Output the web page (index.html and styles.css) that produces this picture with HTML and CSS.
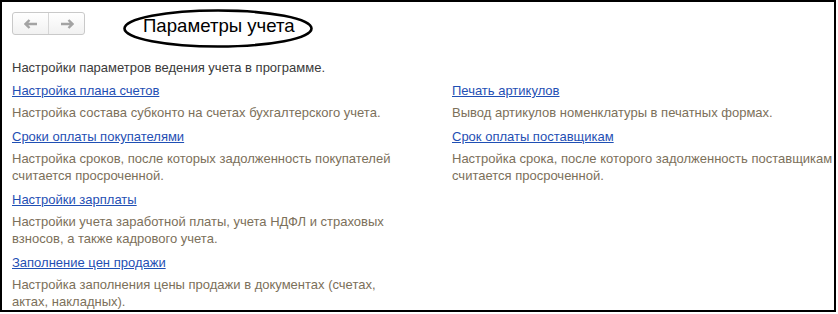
FILE: index.html
```html
<!DOCTYPE html>
<html lang="ru">
<head>
<meta charset="utf-8">
<link rel="stylesheet" href="styles.css">
</head>
<body>
<div class="frame">
  <div class="header">
    <div class="nav">
      <span class="nav-btn">
        <svg width="14" height="10" viewBox="0 0 14 10"><path d="M1 5H13M5.5 1L1.5 5L5.5 9" fill="none" stroke="#a3a3a3" stroke-width="2.4"/></svg>
      </span>
      <span class="nav-btn">
        <svg width="14" height="10" viewBox="0 0 14 10"><path d="M1 5H13M8.5 1L12.5 5L8.5 9" fill="none" stroke="#a3a3a3" stroke-width="2.4"/></svg>
      </span>
    </div>
    <div class="title-wrap">
      <h1 class="title">Параметры учета</h1>
      <svg class="ellipse" width="192" height="41" viewBox="0 0 192 41"><ellipse cx="96" cy="20.5" rx="93.5" ry="18" fill="none" stroke="#000" stroke-width="2.6"/></svg>
    </div>
  </div>
  <p class="intro">Настройки параметров ведения учета в программе.</p>
  <div class="columns">
    <div class="col col-left">
      <div class="item">
        <a class="link" href="#">Настройка плана счетов</a>
        <p class="desc">Настройка состава субконто на счетах бухгалтерского учета.</p>
      </div>
      <div class="item">
        <a class="link" href="#">Сроки оплаты покупателями</a>
        <p class="desc">Настройка сроков, после которых задолженность покупателей считается просроченной.</p>
      </div>
      <div class="item">
        <a class="link" href="#">Настройки зарплаты</a>
        <p class="desc">Настройки учета заработной платы, учета НДФЛ и страховых взносов, а также кадрового учета.</p>
      </div>
      <div class="item">
        <a class="link" href="#">Заполнение цен продажи</a>
        <p class="desc">Настройка заполнения цены продажи в документах (счетах, актах, накладных).</p>
      </div>
    </div>
    <div class="col col-right">
      <div class="item">
        <a class="link" href="#">Печать артикулов</a>
        <p class="desc">Вывод артикулов номенклатуры в печатных формах.</p>
      </div>
      <div class="item">
        <a class="link" href="#">Срок оплаты поставщикам</a>
        <p class="desc">Настройка срока, после которого задолженность поставщикам считается просроченной.</p>
      </div>
    </div>
  </div>
</div>
</body>
</html>
```

FILE: styles.css
```css
* { box-sizing: border-box; }
html, body {
  margin: 0;
  padding: 0;
  background: #fff;
}
body {
  font-family: "Liberation Sans", Arial, sans-serif;
  font-size: 13px;
  color: #333;
}
.frame {
  width: 836px;
  height: 312px;
  border: 2px solid #000;
  padding: 10px 0 0 10px;
  overflow: hidden;
}
.header {
  display: flex;
  align-items: flex-start;
  height: 47px;
}
.nav {
  display: flex;
  width: 73px;
  height: 23px;
  border: 1px solid #c9c9c9;
  border-radius: 3px;
  background: linear-gradient(#ffffff, #f1f1f1);
}
.nav-btn {
  flex: 1;
  display: flex;
  align-items: center;
  justify-content: center;
}
.nav-btn + .nav-btn {
  border-left: 1px solid #d6d6d6;
}
.title-wrap {
  position: relative;
  margin-left: 58px;
  margin-top: 3px;
}
.title {
  margin: 0;
  font-weight: normal;
  font-size: 18.6px;
  line-height: 22px;
  color: #000;
}
.ellipse {
  position: absolute;
  left: -21px;
  top: -7px;
}
.intro {
  margin: 0;
  line-height: 17px;
  color: #3a3a3a;
}
.columns {
  display: grid;
  grid-template-columns: 400px 382px;
  column-gap: 40px;
  margin-top: 6px;
}
.col {
  display: flex;
  flex-direction: column;
  gap: 7px;
}
.item {
  display: flex;
  flex-direction: column;
  gap: 5px;
  align-items: flex-start;
}
.link {
  color: #1f4fb4;
  text-decoration: underline;
  line-height: 17px;
}
.desc {
  margin: 0;
  color: #7c705a;
  line-height: 17px;
}
```
